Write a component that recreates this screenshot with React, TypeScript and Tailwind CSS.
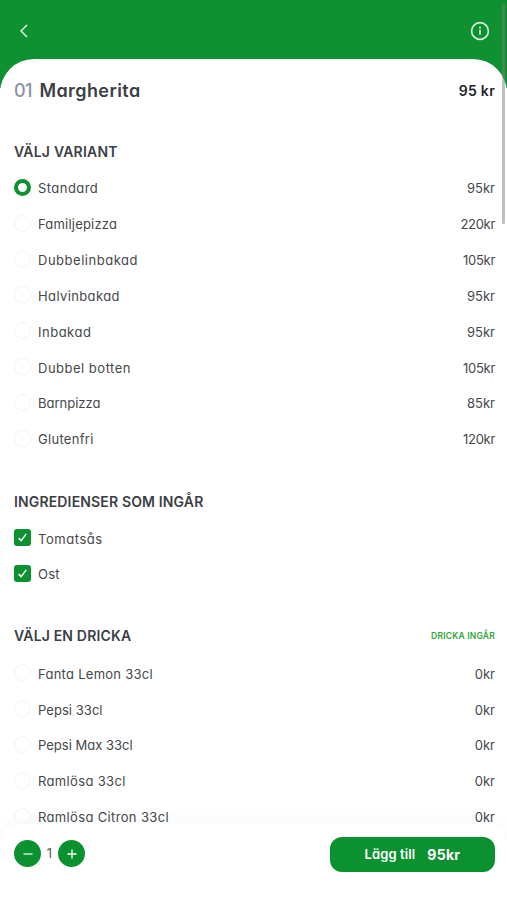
import { useState } from "react"
import clsx from "clsx"

type Item = { name: string; price?: string; fit?: string; priceFit?: string }

const variants: Item[] = [
  { name: "Standard", price: "95kr", fit: "tracking-[0.45px]" },
  { name: "Familjepizza", price: "220kr", fit: "tracking-[0.2px]", priceFit: "tracking-[-0.3px]" },
  { name: "Dubbelinbakad", price: "105kr", fit: "tracking-[0.52px]", priceFit: "tracking-[-0.3px]" },
  { name: "Halvinbakad", price: "95kr", fit: "tracking-[0.38px]" },
  { name: "Inbakad", price: "95kr", fit: "tracking-[0.5px]" },
  { name: "Dubbel botten", price: "105kr", fit: "tracking-[0.5px]", priceFit: "tracking-[-0.3px]" },
  { name: "Barnpizza", price: "85kr" },
  { name: "Glutenfri", price: "120kr", fit: "tracking-[0.3px]", priceFit: "tracking-[-0.3px]" },
]

const ingredients: Item[] = [
  { name: "Tomatsås", fit: "tracking-[0.55px]" },
  { name: "Ost", fit: "tracking-[0.2px]" },
]

const drinks: Item[] = [
  { name: "Fanta Lemon 33cl", price: "0kr", fit: "tracking-[0.27px]" },
  { name: "Pepsi 33cl", price: "0kr", fit: "tracking-[0.05px]" },
  { name: "Pepsi Max 33cl", price: "0kr" },
  { name: "Ramlösa 33cl", price: "0kr", fit: "tracking-[0.35px]" },
  { name: "Ramlösa Citron 33cl", price: "0kr", fit: "tracking-[0.35px]" },
]

function Radio({ checked }: { checked: boolean }) {
  return (
    <span
      className={clsx(
        "block size-[17px] rounded-full bg-white",
        checked ? "border-[4.5px] border-[#0c9130]" : "border border-[#f3f3f4]"
      )}
    />
  )
}

function Check({ checked }: { checked: boolean }) {
  return (
    <span className="flex size-[17px] items-center justify-center rounded-[3px] bg-[#0c9130]">
      {checked && (
        <svg viewBox="0 0 17 17" className="size-[17px]" fill="none" stroke="#fff" strokeWidth="1.5">
          <path d="M4.6 9.1 7.2 11.7 12.2 4.9" />
        </svg>
      )}
    </span>
  )
}

function Row({ item, onClick, children }: { item: Item; onClick: () => void; children: React.ReactNode }) {
  return (
    <button
      onClick={onClick}
      className="flex h-[35.83px] w-full shrink-0 items-center text-left text-[13px] leading-5 text-[#45484b]"
    >
      <span className="mr-[7px] pb-[2px]">{children}</span>
      <span className={item.fit}>{item.name}</span>
      <span className={clsx("ml-auto", item.priceFit)}>{item.price}</span>
    </button>
  )
}

export default function App() {
  const [variant, setVariant] = useState("Standard")
  const [drink, setDrink] = useState("")
  const [removed, setRemoved] = useState<string[]>([])
  const [count, setCount] = useState(1)

  const toggle = (name: string) =>
    setRemoved((r) => (r.includes(name) ? r.filter((n) => n !== name) : [...r, name]))

  return (
    <div className="relative flex h-[900px] w-[507px] flex-col overflow-hidden bg-white font-['Inter','Noto_Sans',sans-serif] [font-feature-settings:'cv11']">
      <div className="flex min-h-0 flex-1 flex-col bg-[linear-gradient(#0f9132_88px,#fff_88px)]">
        <header className="flex h-[59px] shrink-0 items-center justify-between pt-[2px] pr-[17px] pl-[19px]">
          <svg viewBox="0 0 10 14" className="h-[14px] w-[10px]" fill="none" stroke="#d6f5dc" strokeWidth="1.5">
            <path d="M8 1 2 7l6 6" />
          </svg>
          <svg viewBox="0 0 20 20" className="size-5" fill="none" stroke="#d6f5dc" strokeWidth="1.6">
            <circle cx="10" cy="10" r="8.4" />
            <path d="M10 8.7v5.1M10 5.8v1.6" />
          </svg>
        </header>

        <main className="flex min-h-0 flex-1 flex-col overflow-hidden rounded-t-[34px] bg-white pr-3 pl-[14px]">
          <div className="flex h-[62px] shrink-0 items-center">
            <span className="mr-[7.5px] text-[18px] font-medium tracking-[-0.6px] text-[#8b92a0]">01</span>
            <h1 className="text-[18px] font-semibold tracking-[0.42px] text-[#3b3f45]">Margherita</h1>
            <span className="ml-auto text-[14px] font-semibold tracking-[0.3px] text-[#23262a]">95 kr</span>
          </div>

          <h2 className="mt-[20.5px] mb-[9px] h-5 shrink-0 text-[14px] leading-5 font-semibold tracking-[0.2px] text-[#3b3f45]">
            VÄLJ VARIANT
          </h2>
          {variants.map((v) => (
            <Row key={v.name} item={v} onClick={() => setVariant(v.name)}>
              <Radio checked={variant === v.name} />
            </Row>
          ))}

          <h2 className="mt-[34.5px] mb-[9px] h-5 shrink-0 text-[14px] leading-5 font-semibold tracking-[0.15px] text-[#3b3f45]">
            INGREDIENSER SOM INGÅR
          </h2>
          {ingredients.map((v) => (
            <Row key={v.name} item={v} onClick={() => toggle(v.name)}>
              <Check checked={!removed.includes(v.name)} />
            </Row>
          ))}

          <div className="mt-[34px] mb-[9.5px] flex h-5 shrink-0 items-center justify-between">
            <h2 className="text-[14px] leading-5 font-semibold tracking-[0.17px] text-[#3b3f45]">VÄLJ EN DRICKA</h2>
            <span className="text-[8.5px] font-semibold tracking-[0.22px] text-[#2fa836]">DRICKA INGÅR</span>
          </div>
          {drinks.map((v) => (
            <Row key={v.name} item={v} onClick={() => setDrink(v.name)}>
              <Radio checked={drink === v.name} />
            </Row>
          ))}
        </main>
      </div>

      <footer className="z-10 flex h-[76px] shrink-0 items-start rounded-t-[20px] bg-white pt-[13px] pr-3 pl-[14px] shadow-[0_-4px_16px_rgba(40,60,80,0.03)]">
        <div className="flex h-[33px] items-center text-[13px] text-[#55585b]">
          <button
            onClick={() => setCount(Math.max(1, count - 1))}
            className="flex size-[27px] items-center justify-center rounded-full bg-[#0c9130]"
          >
            <svg viewBox="0 0 10 10" className="size-[10px]" stroke="#fff" strokeWidth="1.2">
              <path d="M.5 5h9" />
            </svg>
          </button>
          <span className="w-[17px] text-center">{count}</span>
          <button
            onClick={() => setCount(count + 1)}
            className="flex size-[27px] items-center justify-center rounded-full bg-[#0c9130]"
          >
            <svg viewBox="0 0 10 10" className="size-[10px]" stroke="#fff" strokeWidth="1.3">
              <path d="M.5 5h9M5 .5v9" />
            </svg>
          </button>
        </div>
        <button className="ml-auto flex h-[35px] w-[165px] items-center justify-center gap-3 rounded-[12px] bg-[#0c9130] text-white">
          <span className="text-[13px] font-semibold tracking-[0.1px]">Lägg till</span>
          <span className="text-[14px] font-bold tracking-[0.3px]">{95 * count}kr</span>
        </button>
      </footer>

      {/* scrollbar thumb */}
      <div className="absolute top-1 right-0.5 z-20 h-[220px] w-[3px] rounded-full bg-[#808080]/50" />
    </div>
  )
}
